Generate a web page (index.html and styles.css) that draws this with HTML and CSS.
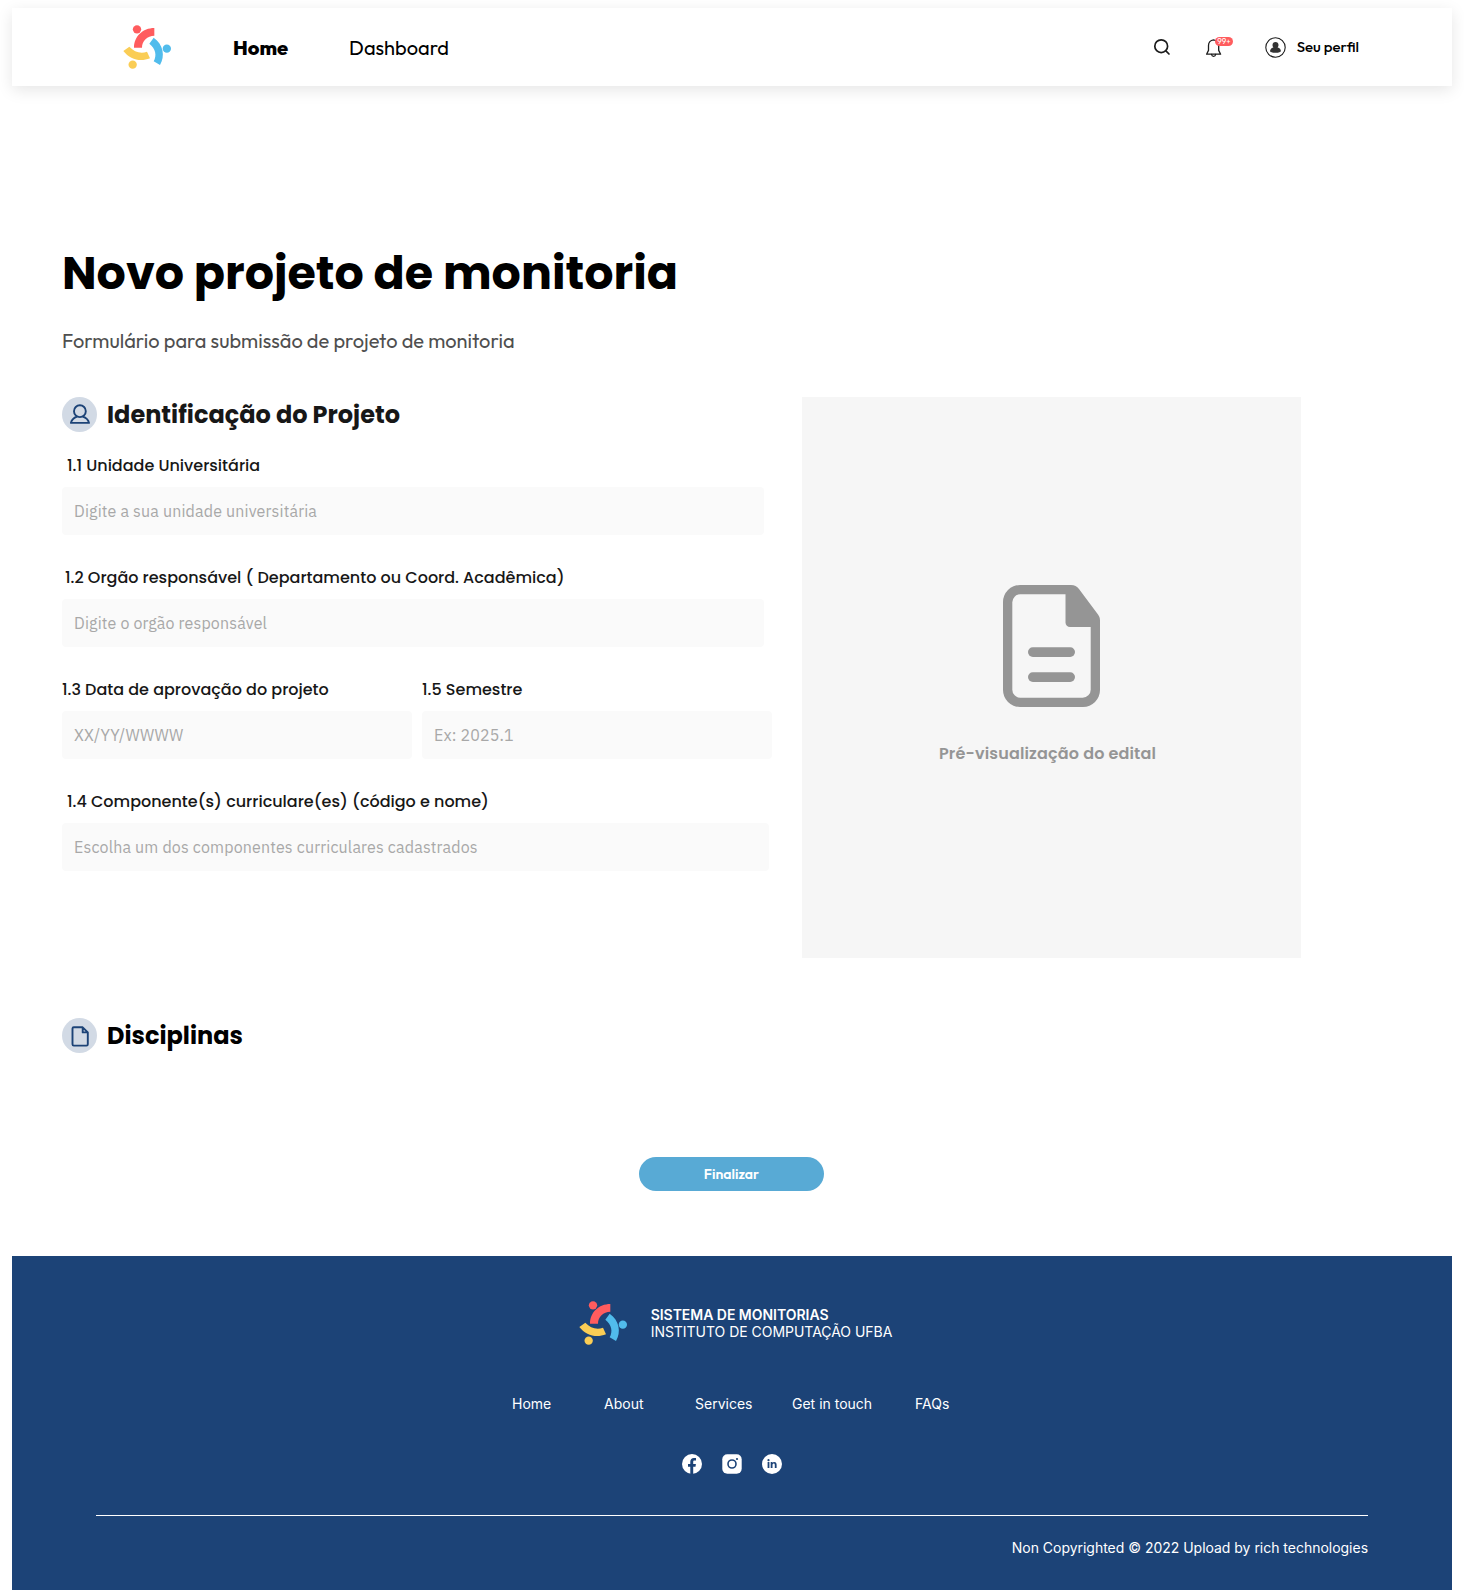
FILE: index.html
```
<!DOCTYPE html>
<html lang="pt-BR">
<head>
<meta charset="utf-8">
<title>Novo projeto de monitoria</title>
<link rel="stylesheet" href="styles.css">
</head>
<body>
<svg class="defs" width="0" height="0" aria-hidden="true">
  <symbol id="logo" viewBox="369 75 144 132">
    <g fill="#ff5c5e"><circle cx="411" cy="88" r="12.5"/><path d="M463 84C428 84 402 110 402 143H426C426 122 442 107 463 107Z"/></g>
    <g fill="#51bcec"><circle cx="500.500" cy="146" r="12.500"/><path d="M461 113C490 133 496 168 480 195L461 184C471 166 467 146 448 131Z"/></g>
    <g fill="#facd55"><circle cx="398" cy="194" r="12.500"/><path d="M370 153L388 140C403 156 422 162 441 155L450 175C420 187 390 178 370 153Z"/></g>
  </symbol>
</svg>

<header class="topbar">
  <svg class="logo"><use href="#logo"/></svg>
  <nav class="topnav">
    <a class="topnav-link active">Home</a>
    <a class="topnav-link">Dashboard</a>
  </nav>
  <div class="actions">
    <svg class="search" width="18" height="18" viewBox="0 0 18 18" fill="none" stroke="#1c1c1c" stroke-width="1.700" stroke-linecap="round"><circle cx="8.200" cy="8.200" r="6.400"/><path d="M12.900 12.900L16 16"/></svg>
    <div class="bell">
      <svg width="18" height="20" viewBox="0 0 18 20" fill="none" stroke="#1c1c1c" stroke-width="1.3" stroke-linejoin="round" stroke-linecap="round"><path d="M8.500 1.800C5.500 2.100 3.500 4.600 3.500 7.500V12.400L1.600 16.200H15.600L13.700 12.400V7.500C13.700 4.600 11.500 2.100 8.500 1.800Z"/><path d="M6.600 16.500C6.900 19 10.300 19 10.600 16.500"/></svg>
      <span class="badge">99+</span>
    </div>
    <div class="profile">
      <svg width="21" height="21" viewBox="0 0 21 21"><circle cx="10.500" cy="10.500" r="9.700" fill="none" stroke="#1c1c1c" stroke-width="1.100"/><path fill="#333" d="M10.500 4.900C12.300 4.900 13.500 6.200 13.500 7.900C13.500 9 13.100 9.700 12.500 10.200C14.700 10.900 15.900 12.400 15.900 14C15.900 15.200 13.800 15.800 10.500 15.800S5.100 15.200 5.100 14C5.100 12.400 6.300 10.900 8.500 10.200C7.900 9.700 7.500 9 7.500 7.900C7.500 6.200 8.700 4.900 10.500 4.900Z"/></svg>
      <span>Seu perfil</span>
    </div>
  </div>
</header>

<main class="page">
  <h1 class="title">Novo projeto de monitoria</h1>
  <p class="subtitle">Formulário para submissão de projeto de monitoria</p>

  <div class="columns">
    <form class="form">
      <h2 class="section-title dark">
        <svg class="section-icon" viewBox="0 0 35 35"><circle cx="17.500" cy="17.500" r="17.500" fill="#d2dae5"/><g fill="none" stroke="#1c4377" stroke-width="1.900" stroke-linejoin="round"><circle cx="17.900" cy="14.200" r="5.900"/><path d="M15 19.600C11.900 20.600 9.600 22.900 8.900 25.900H27C26.300 22.900 24 20.600 20.800 19.600"/></g></svg>
        Identificação do Projeto
      </h2>
      <div class="field">
        <label class="label inset" for="unidade">1.1 Unidade Universitária</label>
        <input class="input" id="unidade" placeholder="Digite a sua unidade universitária">
      </div>
      <div class="field">
        <label class="label inset-small" for="orgao">1.2 Orgão responsável ( Departamento ou Coord. Acadêmica)</label>
        <input class="input" id="orgao" placeholder="Digite o orgão responsável">
      </div>
      <div class="field-row">
        <div class="field half">
          <label class="label" for="data">1.3 Data de aprovação do projeto</label>
          <input class="input" id="data" placeholder="XX/YY/WWWW">
        </div>
        <div class="field half">
          <label class="label" for="semestre">1.5 Semestre</label>
          <input class="input" id="semestre" placeholder="Ex: 2025.1">
        </div>
      </div>
      <div class="field wide">
        <label class="label inset" for="componentes">1.4 Componente(s) curriculare(es) (código e nome)</label>
        <input class="input" id="componentes" placeholder="Escolha um dos componentes curriculares cadastrados">
      </div>
    </form>

    <aside class="preview">
      <svg width="97" height="122" viewBox="0 0 97 122"><path fill="#959595" fill-rule="evenodd" d="M17 0H68C71.500 0 74 1.500 76 4L95 29.500C96.400 31.400 97 33 97 35.500V105A17 17 0 0 1 80 122H17A17 17 0 0 1 0 105V17A17 17 0 0 1 17 0ZM17.300 9.300A8 8 0 0 0 9.300 17.300V104.700A8 8 0 0 0 17.300 112.700H79.700A8 8 0 0 0 87.700 104.700V42H67A4.500 4.500 0 0 1 62.500 37.500V9.300Z"/><g fill="#959595"><rect x="25" y="62.300" width="47" height="9.600" rx="4.800"/><rect x="25" y="87.300" width="47" height="9.600" rx="4.800"/></g></svg>
      <p class="preview-text">Pré-visualização do edital</p>
    </aside>
  </div>

  <h2 class="section-title disciplines">
    <svg class="section-icon" viewBox="0 0 35 35"><circle cx="17.500" cy="17.500" r="17.500" fill="#d2dae5"/><path d="M11.800 9.300H20.700L25.800 14.400V26.300Q25.800 27.600 24.500 27.600H11.800Q10.500 27.600 10.500 26.300V10.600Q10.500 9.300 11.800 9.300ZM20.700 9.300V14.400H25.800" fill="none" stroke="#1c4377" stroke-width="1.900" stroke-linejoin="round"/></svg>
    Disciplinas
  </h2>
  <button class="submit">Finalizar</button>
</main>

<footer class="footer">
  <div class="brand">
    <svg class="logo"><use href="#logo"/></svg>
    <p class="brand-text"><strong>SISTEMA DE MONITORIAS</strong><br>INSTITUTO DE COMPUTAÇÃO UFBA</p>
  </div>
  <nav class="footer-nav">
    <a>Home</a><a>About</a><a>Services</a><a>Get in touch</a><a>FAQs</a>
  </nav>
  <div class="social">
    <svg viewBox="0 0 20 20"><circle cx="10" cy="10" r="10" fill="#fff"/><path fill="#1c4377" d="M8.300 20V12.800H6V10H8.300V7.800C8.300 5.300 9.700 4 11.900 4H14V6.600H12.600C11.600 6.600 11.200 7.100 11.200 8V10H13.900L13.500 12.800H11.200V20Z"/></svg>
    <svg viewBox="0 0 20 20"><rect x=".3" y=".3" width="19.400" height="19.400" rx="5" fill="#fff"/><circle cx="10" cy="10" r="4" fill="none" stroke="#1c4377" stroke-width="1.600"/><circle cx="15" cy="5" r="1.100" fill="#1c4377"/></svg>
    <svg viewBox="0 0 20 20"><circle cx="10" cy="10" r="10" fill="#fff"/><g fill="#1c4377"><circle cx="6.500" cy="6.200" r="1.100"/><path d="M5.600 8H7.400V14H5.600ZM8.700 8H10.400V8.800C11.500 7.300 14.600 7.500 14.600 10.500V14H12.800V10.900C12.800 8.800 10.500 9.100 10.500 10.900V14H8.700Z"/></g></svg>
  </div>
  <p class="copyright">Non Copyrighted © 2022 Upload by rich technologies</p>
</footer>
</body>
</html>
```
FILE: styles.css
```
* {
  box-sizing: border-box;
}

body {
  margin: 0;
  padding: 8px 12px 0;
  background: #fff;
  color: #000;
  font-family: "Poppins", "Inter", sans-serif;
}

h1, h2, p {
  margin: 0;
}

svg {
  display: block;
  flex: none;
}

.defs {
  position: absolute;
}

.logo {
  width: 48px;
  height: 44px;
}

.topbar {
  display: flex;
  align-items: center;
  height: 78px;
  padding: 0 93px 0 111px;
  background: #fff;
  box-shadow: 0 4px 15px rgba(0, 0, 0, 0.1);
  font-family: "Outfit", "Lato", sans-serif;
}

.topnav {
  display: flex;
  gap: 61px;
  margin: 2px 0 0 62px;
  font-size: 20px;
  line-height: 26px;
}

.active {
  font-weight: 800;
}

.actions {
  display: flex;
  align-items: center;
  margin-left: auto;
}

.bell {
  position: relative;
  margin: 2px 42px 0 34px;
}

.badge {
  position: absolute;
  top: -1px;
  left: 10px;
  width: 18px;
  height: 9px;
  border-radius: 5px;
  background: #ff5c5e;
  color: #fff;
  font-size: 8px;
  line-height: 9px;
  text-align: center;
}

.profile {
  display: flex;
  align-items: center;
  gap: 11px;
  font-size: 15px;
  font-weight: 500;
  line-height: 20px;
}

.page {
  display: flex;
  flex-direction: column;
  padding: 151px 50px 65px;
}

.title {
  font-size: 46px;
  font-weight: 700;
  line-height: 73px;
}

.subtitle {
  margin-top: 18px;
  color: #4f4f4f;
  font: 400 20px/26px "Outfit", "Lato", sans-serif;
}

.columns {
  display: flex;
  margin-top: 43px;
}

.form {
  display: flex;
  flex-direction: column;
  gap: 30px;
  width: 740px;
}

.section-title {
  display: flex;
  align-items: center;
  gap: 10px;
  height: 35px;
  font-size: 24px;
  font-weight: 700;
  line-height: 35px;
}

.form .section-title {
  margin-bottom: -9px;
}

.dark {
  color: #171717;
}

.section-icon {
  width: 35px;
  height: 35px;
}

.field {
  display: flex;
  flex-direction: column;
  gap: 9px;
  width: 702px;
}

.field-row {
  display: flex;
  gap: 10px;
}

.half {
  width: 350px;
}

.wide {
  width: 707px;
}

.label {
  color: #171717;
  font-size: 16px;
  font-weight: 500;
  line-height: 25px;
}

.inset {
  padding-left: 5px;
}

.inset-small {
  padding-left: 3px;
}

.input {
  width: 100%;
  height: 48px;
  padding: 0 12px;
  border: 0;
  border-radius: 4px;
  background: #fafafa;
  font: 400 16px/24px "IBM Plex Sans", "Open Sans", sans-serif;
  letter-spacing: 0.01em;
}

.input::placeholder {
  color: #a8a8a8;
}

.preview {
  display: flex;
  flex-direction: column;
  align-items: center;
  gap: 35px;
  width: 499px;
  height: 561px;
  padding-top: 188px;
  background: #f6f6f6;
}

.preview-text {
  padding-right: 8px;
  color: #959595;
  font-size: 16px;
  font-weight: 600;
  line-height: 24px;
  letter-spacing: 0.01em;
}

.disciplines {
  margin-top: 60px;
}

.submit {
  align-self: center;
  width: 185px;
  height: 34px;
  margin: 104px 1px 0 0;
  border: 0;
  border-radius: 17px;
  background: #58aad5;
  color: #fff;
  font: 600 14px/18px "Outfit", "Lato", sans-serif;
}

.footer {
  display: flex;
  flex-direction: column;
  align-items: center;
  height: 334px;
  padding-top: 45px;
  background: #1c4377;
  color: #fff;
  font: 400 14px/17px "Inter", sans-serif;
}

.brand {
  display: flex;
  align-items: center;
  gap: 24px;
  margin-left: 7px;
}

.brand-text {
  letter-spacing: -0.03px;
}

.brand-text strong {
  font-weight: 600;
}

.footer-nav {
  display: grid;
  grid-template-columns: 92px 91px 97px 123px 37px;
  margin-top: 50px;
}

.social {
  display: flex;
  gap: 20px;
  margin-top: 42px;
}

.social svg {
  width: 20px;
  height: 20px;
}

.copyright {
  width: 1272px;
  margin-top: 41px;
  padding-top: 23px;
  border-top: 1px solid #fff;
  letter-spacing: -0.02px;
  text-align: right;
}
```
